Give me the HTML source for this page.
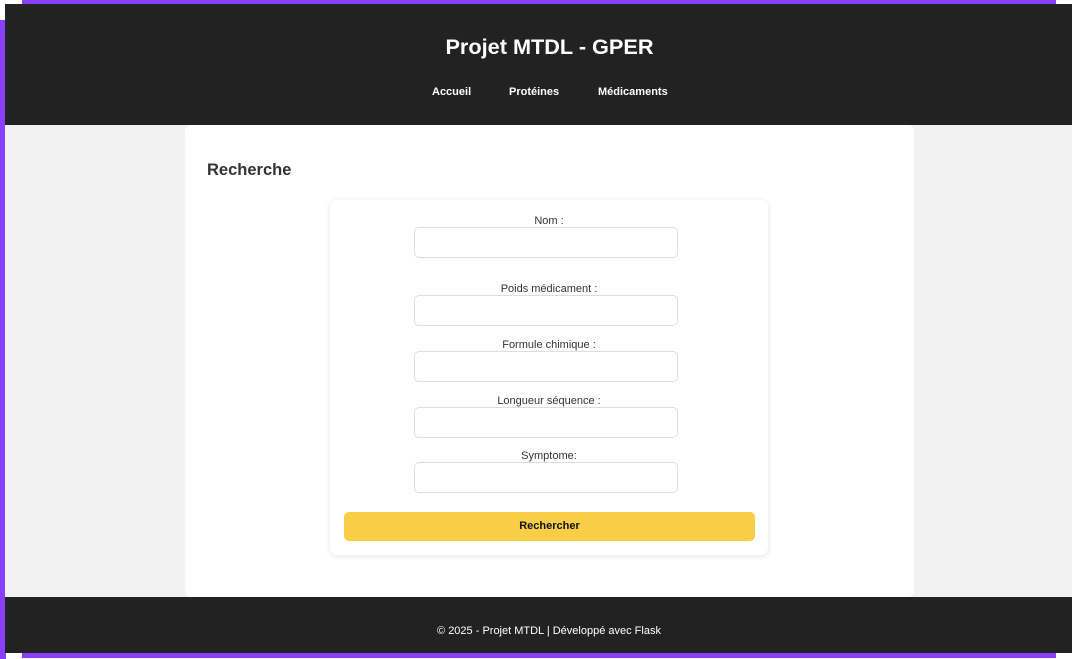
<!DOCTYPE html>
<html><head><meta charset="utf-8"><style>
*{margin:0;padding:0;box-sizing:border-box}
body{width:1072px;height:659px;background:#fff;position:relative;overflow:hidden;font-family:"Liberation Sans",Arial,sans-serif}
.a{position:absolute}
.lbl{position:absolute;left:330px;width:438px;text-align:center;font-size:11px;color:#333}
.inp{position:absolute;left:414px;width:264px;height:31px;border:1px solid #ddd;border-radius:5px;background:#fff}
</style></head><body>
<div class="a" style="left:22px;top:0;width:1034px;height:5px;background:#8a3ffc"></div>
<div class="a" style="left:0;top:20px;width:6px;height:639px;background:#8a3ffc"></div>
<div class="a" style="left:22px;top:652px;width:1034px;height:6px;background:#8a3ffc"></div>
<div class="a" style="left:5px;top:4px;width:1067px;height:649px;background:#f2f2f2"></div>
<div class="a" style="left:5px;top:4px;width:1067px;height:121px;background:#222"></div>
<div class="a" style="left:5px;top:34px;width:1089px;text-align:center;color:#fff;font-weight:bold;font-size:21.7px">Projet MTDL - GPER</div>
<div class="a" style="left:432px;top:86px;color:#fff;font-weight:bold;font-size:11px">Accueil</div>
<div class="a" style="left:509px;top:86px;color:#fff;font-weight:bold;font-size:11px">Protéines</div>
<div class="a" style="left:598px;top:86px;color:#fff;font-weight:bold;font-size:11px">Médicaments</div>
<div class="a" style="left:185px;top:125px;width:729px;height:472px;background:#fff;border-radius:6px"></div>
<div class="a" style="left:207px;top:161px;color:#333;font-weight:bold;font-size:16.5px">Recherche</div>
<div class="a" style="left:330px;top:200px;width:438px;height:355px;background:#fff;border-radius:7px;box-shadow:0 1px 6px rgba(0,0,0,.12)"></div>
<div class="lbl" style="top:215px">Nom :</div><div class="inp" style="top:227px"></div>
<div class="lbl" style="top:283px">Poids médicament :</div><div class="inp" style="top:295px"></div>
<div class="lbl" style="top:339px">Formule chimique :</div><div class="inp" style="top:351px"></div>
<div class="lbl" style="top:395px">Longueur séquence :</div><div class="inp" style="top:407px"></div>
<div class="lbl" style="top:450px">Symptome:</div><div class="inp" style="top:462px"></div>
<div class="a" style="left:344px;top:512px;width:411px;height:29px;background:#f8ce46;border-radius:5px;text-align:center;line-height:29px;font-weight:bold;font-size:11px;color:#111">Rechercher</div>
<div class="a" style="left:5px;top:597px;width:1067px;height:56px;background:#222"></div>
<div class="a" style="left:5px;top:625px;width:1088px;text-align:center;color:#fff;font-size:11px">© 2025 - Projet MTDL | Développé avec Flask</div>
</body></html>
